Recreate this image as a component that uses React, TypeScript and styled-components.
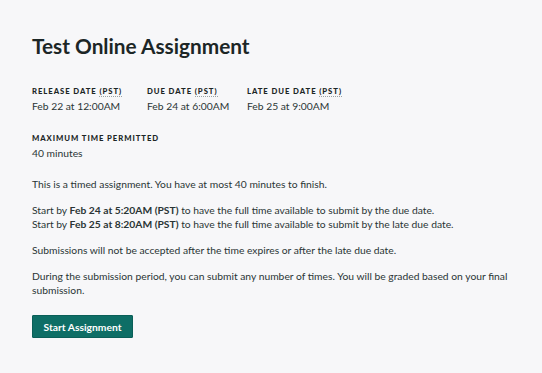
import React from "react";
import styled, { createGlobalStyle } from "styled-components";

const Global = createGlobalStyle`
  html, body { margin: 0; padding: 0; background: #f7f7f9; }
  body { font-family: Lato, "Open Sans", sans-serif; color: #1f2a2a; }
`;

const Page = styled.main`
  padding: 34px 32px 30px 32px;
`;

const Title = styled.h1`
  margin: 0 0 28px 0;
  font-size: 20.8px;
  font-weight: 700;
  line-height: 24px;
  color: #1c2626;
`;

const MetaRow = styled.div<{ $mb: number }>`
  display: flex;
  margin-bottom: ${(p) => p.$mb}px;
`;

const MetaItem = styled.div<{ $w?: number }>`
  width: ${(p) => (p.$w ? `${p.$w}px` : "auto")};
  display: flex;
  flex-direction: column;
  gap: 3px;
`;

const Label = styled.div`
  font-size: 7.7px;
  font-weight: 900;
  letter-spacing: 0.95px;
  text-transform: uppercase;
  line-height: 11px;
  color: #1c2626;
`;

const Abbr = styled.abbr`
  text-decoration: none;
  border-bottom: 1px dotted #9aa3a3;
`;

const Value = styled.div`
  font-size: 10.3px;
  line-height: 13px;
  color: #2a3535;
`;

const Para = styled.p`
  margin: 0 0 12px 0;
  font-size: 10.3px;
  line-height: 14px;
  color: #2a3535;
`;

const Button = styled.button`
  margin-top: 6px;
  background: #0e6e66;
  color: #ffffff;
  border: 1px solid #0a5f58;
  border-radius: 1px;
  font-family: Lato, sans-serif;
  font-size: 10.3px;
  font-weight: 700;
  height: 23px;
  width: 101px;
  padding: 0;
  cursor: pointer;
`;

export default function App() {
  return (
    <>
      <Global />
      <Page>
        <Title>Test Online Assignment</Title>
        <MetaRow $mb={20}>
          <MetaItem $w={115}>
            <Label>Release Date <Abbr>(PST)</Abbr></Label>
            <Value>Feb 22 at 12:00AM</Value>
          </MetaItem>
          <MetaItem $w={100}>
            <Label>Due Date <Abbr>(PST)</Abbr></Label>
            <Value>Feb 24 at 6:00AM</Value>
          </MetaItem>
          <MetaItem>
            <Label>Late Due Date <Abbr>(PST)</Abbr></Label>
            <Value>Feb 25 at 9:00AM</Value>
          </MetaItem>
        </MetaRow>
        <MetaRow $mb={17}>
          <MetaItem>
            <Label>Maximum Time Permitted</Label>
            <Value>40 minutes</Value>
          </MetaItem>
        </MetaRow>
        <Para>This is a timed assignment. You have at most 40 minutes to finish.</Para>
        <Para>
          Start by <b>Feb 24 at 5:20AM (PST)</b> to have the full time available to submit by the due date.
          <br />
          Start by <b>Feb 25 at 8:20AM (PST)</b> to have the full time available to submit by the late due date.
        </Para>
        <Para>Submissions will not be accepted after the time expires or after the late due date.</Para>
        <Para>
          During the submission period, you can submit any number of times. You will be graded based on your final
          submission.
        </Para>
        <Button>Start Assignment</Button>
      </Page>
    </>
  );
}
